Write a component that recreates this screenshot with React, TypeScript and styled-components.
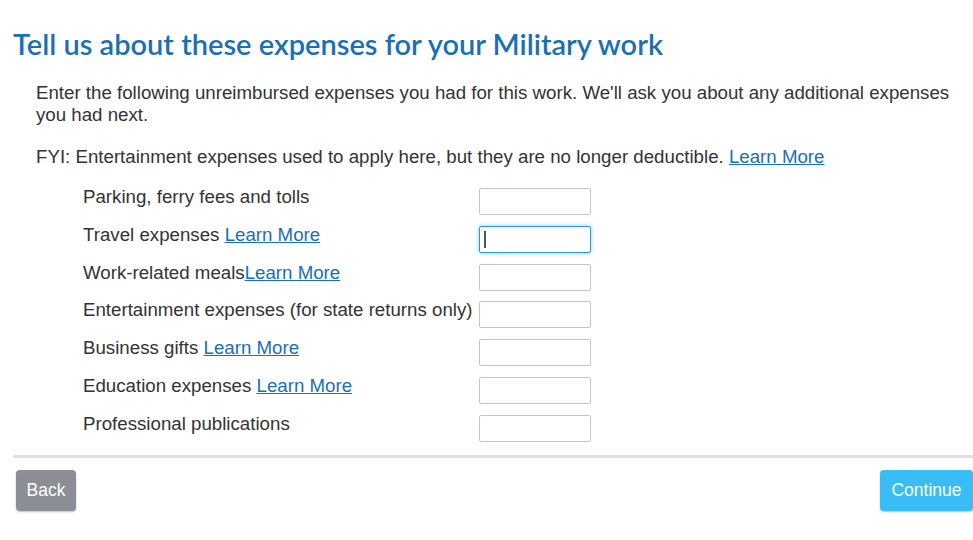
import React from 'react'
import styled, { createGlobalStyle } from 'styled-components'

const GlobalStyle = createGlobalStyle`
  body {
    margin: 0;
    background: #fff;
    font-family: 'Liberation Sans', Arial, sans-serif;
    color: #333;
  }
`

interface ExpenseRow {
  label: string
  learnMore?: boolean
  gap?: boolean
  focused?: boolean
}

const rows: ExpenseRow[] = [
  { label: 'Parking, ferry fees and tolls' },
  { label: 'Travel expenses', learnMore: true, gap: true, focused: true },
  { label: 'Work-related meals', learnMore: true },
  { label: 'Entertainment expenses (for state returns only)' },
  { label: 'Business gifts', learnMore: true, gap: true },
  { label: 'Education expenses', learnMore: true, gap: true },
  { label: 'Professional publications' },
]

const App = () => {
  return (
    <Page>
      <GlobalStyle />
      <Title>Tell us about these expenses for your Military work</Title>
      <Body>
        <Paragraph>
          Enter the following unreimbursed expenses you had for this work. We'll ask you about any
          additional expenses you had next.
        </Paragraph>
        <Paragraph>
          FYI: Entertainment expenses used to apply here, but they are no longer deductible.{' '}
          <Link href='#'>Learn More</Link>
        </Paragraph>
      </Body>
      <Form>
        {rows.map((row) => (
          <Row key={row.label}>
            <Label>
              {row.label}
              {row.learnMore && (
                <>
                  {row.gap ? ' ' : ''}
                  <Link href='#'>Learn More</Link>
                </>
              )}
            </Label>
            <AmountInput focused={row.focused}>{row.focused && <Caret />}</AmountInput>
          </Row>
        ))}
      </Form>
      <Divider />
      <Footer>
        <BackButton>Back</BackButton>
        <ContinueButton>Continue</ContinueButton>
      </Footer>
    </Page>
  )
}

const Page = styled.div`
  width: 973px;
  height: 540px;
  padding: 26px 0 0 13px;
  box-sizing: border-box;
  overflow: hidden;
`

const Title = styled.h1`
  margin: 0;
  font-family: Lato, 'Open Sans', sans-serif;
  font-weight: 600;
  font-size: 29px;
  line-height: 36px;
  color: #1b6fb3;
`

const Body = styled.div`
  padding: 20px 0 0 23px;
`

const Paragraph = styled.p`
  margin: 0 0 20px;
  font-size: 18.7px;
  line-height: 22px;
  color: #333;
`

const Link = styled.a`
  color: #1a6fb4;
  text-decoration: underline;
`

const Form = styled.div`
  display: flex;
  flex-direction: column;
  gap: 7.8px;
  padding-left: 70px;
  margin-top: -3px;
`

const Row = styled.div`
  display: flex;
  align-items: flex-start;
`

const Label = styled.div`
  width: 396px;
  padding-top: 1px;
  font-size: 18.7px;
  line-height: 22px;
  color: #333;
  white-space: nowrap;
`

const AmountInput = styled.div<{ focused?: boolean }>`
  width: 112px;
  height: 27px;
  box-sizing: border-box;
  margin-top: 3px;
  border: 1px solid ${(p) => (p.focused ? '#2b9bd3' : '#c4c4c4')};
  border-radius: 2px;
  box-shadow: ${(p) => (p.focused ? '0 0 4px rgba(43, 160, 220, 0.6)' : 'none')};
  display: flex;
  align-items: center;
  padding: 0 4px;
`

const Caret = styled.span`
  width: 2px;
  height: 17px;
  background: #555;
`

const Divider = styled.div`
  height: 3px;
  background: #e0e0e0;
  margin-top: 13px;
`

const Footer = styled.div`
  display: flex;
  justify-content: space-between;
  padding: 12px 0 0 3px;
`

const Button = styled.button`
  height: 41px;
  border: none;
  border-radius: 4px;
  color: #fff;
  font-family: 'Liberation Sans', Arial, sans-serif;
  font-size: 17.5px;
  box-shadow: 0 1px 2px rgba(0, 0, 0, 0.25);
  cursor: pointer;
`

const BackButton = styled(Button)`
  width: 60px;
  background: #8b8e94;
`

const ContinueButton = styled(Button)`
  width: 93px;
  background: #38bdf5;
`

export default App
